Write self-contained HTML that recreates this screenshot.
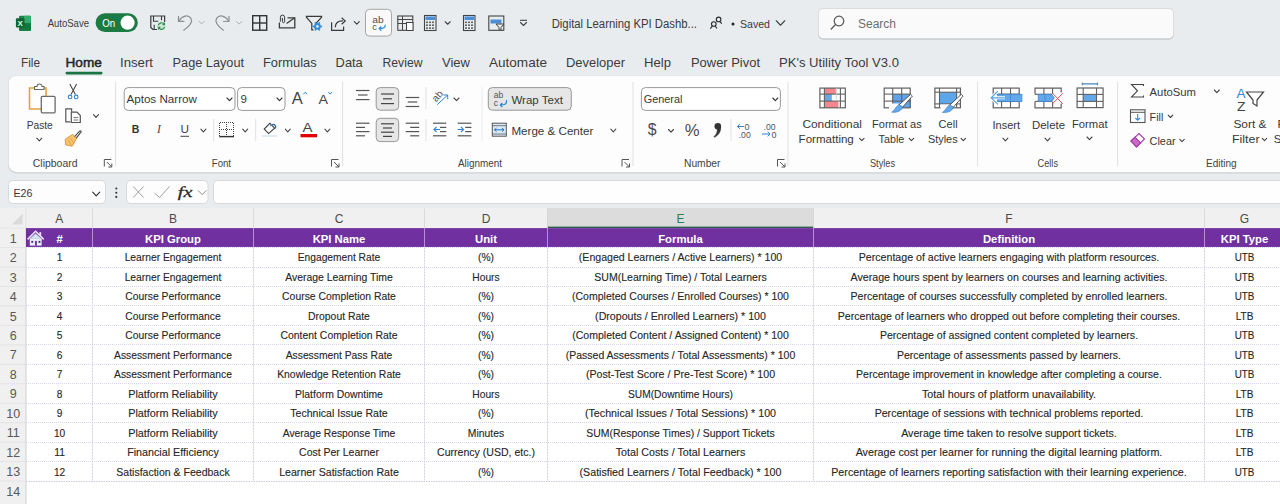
<!DOCTYPE html>
<html><head><meta charset="utf-8"><title>Digital Learning KPI Dashboard - Excel</title>
<style>
html,body{margin:0;padding:0;width:1280px;height:504px;overflow:hidden;background:#e8ecef;}
svg{display:block;font-family:"Liberation Sans",sans-serif;}
</style></head><body>
<svg width="1280" height="504" viewBox="0 0 1280 504">
<rect x="0.00" y="0.00" width="1280.00" height="504.00" fill="#e8ecef"/>
<rect x="19.00" y="15.70" width="12.00" height="15.00" fill="#15854a" rx="1.2"/>
<rect x="24.00" y="15.70" width="7.00" height="7.50" fill="#2fae6c" rx="1"/>
<rect x="19.00" y="23.20" width="12.00" height="7.50" fill="#0f7a40" rx="1"/>
<rect x="15.90" y="18.20" width="8.60" height="9.40" fill="#0b6633" rx="1"/>
<text x="20.20" y="25.60" font-size="8" fill="#e8f5ec" text-anchor="middle" font-weight="bold">X</text>
<text x="47.70" y="27.30" font-size="10.5" fill="#3b3b3b" textLength="41.30" lengthAdjust="spacingAndGlyphs">AutoSave</text>
<rect x="95.60" y="13.30" width="42.20" height="18.70" fill="#1c7b43" rx="9.35"/>
<text x="102.30" y="27.30" font-size="10.5" fill="#fff" textLength="13.00" lengthAdjust="spacingAndGlyphs">On</text>
<circle cx="127.6" cy="22.65" r="7.1" fill="#fff"/>
<path d="M157 29.5 H152.8 L150.8 27.5 V16 H164.6 V22" fill="none" stroke="#3a3a3a" stroke-width="1.2"/>
<path d="M153.5 16 V21.2 H158.3" fill="none" stroke="#3a3a3a" stroke-width="1.1"/>
<path d="M161.5 16 V20.3" fill="none" stroke="#3a3a3a" stroke-width="1.1"/>
<path d="M154.2 24.8 V29.5" fill="none" stroke="#3a3a3a" stroke-width="1.1"/>
<circle cx="161.4" cy="26.1" r="4.6" fill="#c9ecd3"/>
<path d="M158.3 25.4 A3.2 3.2 0 0 1 164.3 24.6 M164.5 26.8 A3.2 3.2 0 0 1 158.5 27.6 M164.4 22.8 V24.8 H162.4 M158.4 29.4 V27.4 H160.4" fill="none" stroke="#2f8a52" stroke-width="1.1"/>
<path d="M178.5 15.9 V21.4 H184.4" fill="none" stroke="#8e8e8e" stroke-width="1.2"/>
<path d="M179 20.9 C182 15.6 188.2 14.2 190.9 18.3 C193.2 22 190.5 25.6 183.4 30.6" fill="none" stroke="#8e8e8e" stroke-width="1.2"/>
<path d="M199.10 21.30 L201.70 23.90 L204.30 21.30" fill="none" stroke="#b0b0b0" stroke-width="1" stroke-linecap="round" stroke-linejoin="round"/>
<path d="M229 15.9 V21.5 H223.1" fill="none" stroke="#8e8e8e" stroke-width="1.2"/>
<path d="M228.5 20.9 C225.5 15.6 219.3 14.2 216.6 18.3 C214.3 22 217 25.6 223.7 30.6" fill="none" stroke="#8e8e8e" stroke-width="1.2"/>
<path d="M236.50 21.50 L239.10 24.10 L241.70 21.50" fill="none" stroke="#b0b0b0" stroke-width="1" stroke-linecap="round" stroke-linejoin="round"/>
<rect x="252.70" y="15.70" width="14.00" height="14.50" fill="none" stroke="#333" stroke-width="1.4"/>
<line x1="259.70" y1="15.70" x2="259.70" y2="30.20" stroke="#333" stroke-width="1.4"/>
<line x1="252.70" y1="23.00" x2="266.70" y2="23.00" stroke="#333" stroke-width="1.4"/>
<path d="M279.4 22.5 V27.9 H294.8 V17.8 H287.5" fill="none" stroke="#3a3a3a" stroke-width="1.3"/>
<path d="M286.6 23.6 L294.4 17.9" fill="none" stroke="#3a3a3a" stroke-width="1.2"/>
<path d="M280.4 21.5 V17.2 A2.1 2.1 0 0 1 284.6 17.2 V21.6 A1.1 1.1 0 0 1 282.4 21.6 V17.9" fill="none" stroke="#3a3a3a" stroke-width="1.0"/>
<path d="M313.5 29.8 H311.8 V23.4 L306.4 17.2 V16.3 H321.6 V17.2 L316.2 23.2" fill="none" stroke="#3a3a3a" stroke-width="1.2"/>
<circle cx="317.4" cy="26.4" r="3.4" fill="#2f8ee0"/><circle cx="317.4" cy="26.4" r="1.3" fill="#e8ecef"/>
<circle cx="321.30" cy="26.40" r="0.9" fill="#2f8ee0"/>
<circle cx="319.35" cy="29.78" r="0.9" fill="#2f8ee0"/>
<circle cx="315.45" cy="29.78" r="0.9" fill="#2f8ee0"/>
<circle cx="313.50" cy="26.40" r="0.9" fill="#2f8ee0"/>
<circle cx="315.45" cy="23.02" r="0.9" fill="#2f8ee0"/>
<circle cx="319.35" cy="23.02" r="0.9" fill="#2f8ee0"/>
<path d="M331.6 22.2 V30.3 H343.6 V26.6" fill="none" stroke="#3a3a3a" stroke-width="1.2"/>
<path d="M335.2 27.2 C335.5 22.5 338.5 20.7 343 20.9 M341.6 17.8 L345.2 20.9 L341.6 24.2" fill="none" stroke="#3a3a3a" stroke-width="1.2"/>
<path d="M354.30 21.55 L356.80 24.05 L359.30 21.55" fill="none" stroke="#3a3a3a" stroke-width="1.1" stroke-linecap="round" stroke-linejoin="round"/>
<rect x="365.50" y="9.30" width="26.00" height="26.80" fill="#f9f9f9" stroke="#9c9c9c" stroke-width="0.9" rx="4"/>
<text x="372.30" y="22.70" font-size="9" fill="#505050" textLength="11.30" lengthAdjust="spacingAndGlyphs">ab</text>
<text x="372.30" y="29.80" font-size="9" fill="#505050" textLength="4.60" lengthAdjust="spacingAndGlyphs">c</text>
<path d="M385.2 24.6 C385.6 27.6 383.4 28.6 379.3 28.6 M381.3 26.5 L379.1 28.6 L381.3 30.7" fill="none" stroke="#2f8ee0" stroke-width="1.2"/>
<rect x="397.80" y="16.00" width="15.00" height="14.30" fill="none" stroke="#444" stroke-width="1.1"/>
<line x1="397.80" y1="19.50" x2="412.80" y2="19.50" stroke="#444" stroke-width="1"/>
<line x1="397.80" y1="23.50" x2="412.80" y2="23.50" stroke="#444" stroke-width="1"/>
<line x1="402.50" y1="16.00" x2="402.50" y2="30.30" stroke="#444" stroke-width="1"/>
<rect x="406.50" y="22.50" width="6.50" height="8.00" fill="#fff" stroke="#444" stroke-width="1"/>
<rect x="424.50" y="15.50" width="11.50" height="15.00" fill="#e8ecef" stroke="#444" stroke-width="1.1"/>
<rect x="425.50" y="16.50" width="9.50" height="3.50" fill="#4a90d9"/>
<rect x="426.20" y="21.50" width="1.60" height="1.60" fill="#444"/>
<rect x="426.20" y="24.40" width="1.60" height="1.60" fill="#444"/>
<rect x="426.20" y="27.30" width="1.60" height="1.60" fill="#444"/>
<rect x="429.20" y="21.50" width="1.60" height="1.60" fill="#444"/>
<rect x="429.20" y="24.40" width="1.60" height="1.60" fill="#444"/>
<rect x="429.20" y="27.30" width="1.60" height="1.60" fill="#444"/>
<rect x="432.20" y="21.50" width="1.60" height="1.60" fill="#444"/>
<rect x="432.20" y="24.40" width="1.60" height="1.60" fill="#444"/>
<rect x="432.20" y="27.30" width="1.60" height="1.60" fill="#444"/>
<rect x="463.50" y="15.50" width="11.50" height="15.00" fill="#e8ecef" stroke="#444" stroke-width="1.1"/>
<rect x="464.50" y="16.50" width="9.50" height="3.50" fill="#4a90d9"/>
<rect x="465.20" y="21.50" width="1.60" height="1.60" fill="#444"/>
<rect x="465.20" y="24.40" width="1.60" height="1.60" fill="#444"/>
<rect x="465.20" y="27.30" width="1.60" height="1.60" fill="#444"/>
<rect x="468.20" y="21.50" width="1.60" height="1.60" fill="#444"/>
<rect x="468.20" y="24.40" width="1.60" height="1.60" fill="#444"/>
<rect x="468.20" y="27.30" width="1.60" height="1.60" fill="#444"/>
<rect x="471.20" y="21.50" width="1.60" height="1.60" fill="#444"/>
<rect x="471.20" y="24.40" width="1.60" height="1.60" fill="#444"/>
<rect x="471.20" y="27.30" width="1.60" height="1.60" fill="#444"/>
<path d="M445.20 21.75 L447.70 24.25 L450.20 21.75" fill="none" stroke="#444" stroke-width="1.1" stroke-linecap="round" stroke-linejoin="round"/>
<rect x="488.80" y="16.00" width="15.00" height="14.30" fill="none" stroke="#444" stroke-width="1.1"/>
<rect x="490.50" y="19.50" width="11.00" height="4.00" fill="#4a90d9"/>
<path d="M496 24 H504 L501 27.5 V30.5 L499 29.5 V27.5 Z" fill="#e8ecef" stroke="#444" stroke-width="1"/>
<line x1="520.00" y1="20.30" x2="527.00" y2="20.30" stroke="#444" stroke-width="1.1"/>
<path d="M520.50 22.50 L523.50 25.50 L526.50 22.50" fill="none" stroke="#444" stroke-width="1.1" stroke-linecap="round" stroke-linejoin="round"/>
<text x="551.70" y="28.00" font-size="12" fill="#3b3b3b" textLength="145.30" lengthAdjust="spacingAndGlyphs">Digital Learning KPI Dashb...</text>
<circle cx="713.8" cy="24.0" r="2.3" fill="none" stroke="#2a2a2a" stroke-width="1.1"/>
<path d="M712.3 26.2 L710.3 28.6 M715.3 26.2 L716.9 28.4" fill="none" stroke="#2a2a2a" stroke-width="1.1"/>
<circle cx="718.6" cy="19.4" r="2.3" fill="none" stroke="#2a2a2a" stroke-width="1.1"/>
<path d="M720.2 21.8 L721.8 23.6" fill="none" stroke="#2a2a2a" stroke-width="1.1"/>
<circle cx="733.0" cy="24.0" r="1.5" fill="#222"/>
<text x="740.00" y="27.80" font-size="11.5" fill="#3b3b3b" textLength="30.00" lengthAdjust="spacingAndGlyphs">Saved</text>
<path d="M776.25 20.75 L780.50 25.25 L784.75 20.75" fill="none" stroke="#444" stroke-width="1.1" stroke-linecap="round" stroke-linejoin="round"/>
<rect x="818.20" y="8.40" width="355.60" height="31.30" fill="#c9ccd0" rx="5"/>
<rect x="818.70" y="8.90" width="354.60" height="29.30" fill="#fafafa" rx="4.5"/>
<circle cx="839" cy="21" r="4.8" fill="none" stroke="#555" stroke-width="1.2"/>
<line x1="835.50" y1="24.50" x2="830.80" y2="29.50" stroke="#555" stroke-width="1.2"/>
<text x="858.00" y="27.50" font-size="12" fill="#6e6e6e" textLength="38.00" lengthAdjust="spacingAndGlyphs">Search</text>
<text x="21.00" y="67.00" font-size="12.7" fill="#3b3b3b" textLength="19.00" lengthAdjust="spacingAndGlyphs">File</text>
<text x="120.00" y="67.00" font-size="12.7" fill="#3b3b3b" textLength="33.00" lengthAdjust="spacingAndGlyphs">Insert</text>
<text x="172.60" y="67.00" font-size="12.7" fill="#3b3b3b" textLength="71.40" lengthAdjust="spacingAndGlyphs">Page Layout</text>
<text x="263.00" y="67.00" font-size="12.7" fill="#3b3b3b" textLength="53.70" lengthAdjust="spacingAndGlyphs">Formulas</text>
<text x="335.60" y="67.00" font-size="12.7" fill="#3b3b3b" textLength="27.20" lengthAdjust="spacingAndGlyphs">Data</text>
<text x="382.50" y="67.00" font-size="12.7" fill="#3b3b3b" textLength="40.00" lengthAdjust="spacingAndGlyphs">Review</text>
<text x="442.00" y="67.00" font-size="12.7" fill="#3b3b3b" textLength="28.00" lengthAdjust="spacingAndGlyphs">View</text>
<text x="489.00" y="67.00" font-size="12.7" fill="#3b3b3b" textLength="58.00" lengthAdjust="spacingAndGlyphs">Automate</text>
<text x="566.00" y="67.00" font-size="12.7" fill="#3b3b3b" textLength="59.00" lengthAdjust="spacingAndGlyphs">Developer</text>
<text x="644.00" y="67.00" font-size="12.7" fill="#3b3b3b" textLength="27.00" lengthAdjust="spacingAndGlyphs">Help</text>
<text x="691.00" y="67.00" font-size="12.7" fill="#3b3b3b" textLength="69.00" lengthAdjust="spacingAndGlyphs">Power Pivot</text>
<text x="779.00" y="67.00" font-size="12.7" fill="#3b3b3b" textLength="120.00" lengthAdjust="spacingAndGlyphs">PK's Utility Tool V3.0</text>
<text x="65.50" y="67.00" font-size="12.7" fill="#242424" textLength="36.30" lengthAdjust="spacingAndGlyphs" stroke="#242424" stroke-width="0.45">Home</text>
<rect x="65.50" y="71.80" width="37.00" height="2.60" fill="#1a7343" rx="1.3"/>
<rect x="8.20" y="75.40" width="1290.00" height="98.10" fill="#cdd0d3" rx="8.5"/>
<rect x="8.70" y="75.70" width="1290.00" height="96.50" fill="#fdfdfd" rx="8"/>
<line x1="115.60" y1="82.00" x2="115.60" y2="166.00" stroke="#e1e1e1" stroke-width="1"/>
<line x1="342.60" y1="82.00" x2="342.60" y2="166.00" stroke="#e1e1e1" stroke-width="1"/>
<line x1="633.00" y1="82.00" x2="633.00" y2="166.00" stroke="#e1e1e1" stroke-width="1"/>
<line x1="788.00" y1="82.00" x2="788.00" y2="166.00" stroke="#e1e1e1" stroke-width="1"/>
<line x1="977.60" y1="82.00" x2="977.60" y2="166.00" stroke="#e1e1e1" stroke-width="1"/>
<line x1="1117.60" y1="82.00" x2="1117.60" y2="166.00" stroke="#e1e1e1" stroke-width="1"/>
<text x="32.80" y="166.50" font-size="10.5" fill="#424242" textLength="44.70" lengthAdjust="spacingAndGlyphs">Clipboard</text>
<text x="211.80" y="166.50" font-size="10.5" fill="#424242" textLength="19.20" lengthAdjust="spacingAndGlyphs">Font</text>
<text x="458.00" y="166.50" font-size="10.5" fill="#424242" textLength="44.00" lengthAdjust="spacingAndGlyphs">Alignment</text>
<text x="684.00" y="166.50" font-size="10.5" fill="#424242" textLength="36.50" lengthAdjust="spacingAndGlyphs">Number</text>
<text x="870.00" y="166.50" font-size="10.5" fill="#424242" textLength="25.00" lengthAdjust="spacingAndGlyphs">Styles</text>
<text x="1037.60" y="166.50" font-size="10.5" fill="#424242" textLength="20.40" lengthAdjust="spacingAndGlyphs">Cells</text>
<text x="1206.00" y="166.50" font-size="10.5" fill="#424242" textLength="30.70" lengthAdjust="spacingAndGlyphs">Editing</text>
<path d="M104.3 166.5 V159.5 H111.3" fill="none" stroke="#555" stroke-width="1"/>
<path d="M106.8 162.0 L111.8 167.0 M111.8 163.5 V167.0 H108.3" fill="none" stroke="#555" stroke-width="1"/>
<path d="M331.5 166.5 V159.5 H338.5" fill="none" stroke="#555" stroke-width="1"/>
<path d="M334.0 162.0 L339.0 167.0 M339.0 163.5 V167.0 H335.5" fill="none" stroke="#555" stroke-width="1"/>
<path d="M622 166.5 V159.5 H629" fill="none" stroke="#555" stroke-width="1"/>
<path d="M624.5 162.0 L629.5 167.0 M629.5 163.5 V167.0 H626" fill="none" stroke="#555" stroke-width="1"/>
<path d="M777.5 166.5 V159.5 H784.5" fill="none" stroke="#555" stroke-width="1"/>
<path d="M780.0 162.0 L785.0 167.0 M785.0 163.5 V167.0 H781.5" fill="none" stroke="#555" stroke-width="1"/>
<path d="M29.5 88 H46 V109 H29.5 Z" fill="#fff" stroke="#e3a43b" stroke-width="1.6"/>
<path d="M34.5 89.5 V86.5 H37 A2.5 2.5 0 0 1 42 86.5 H44 V89.5 Z" fill="#fff" stroke="#6a6a6a" stroke-width="1.1"/>
<rect x="41.30" y="96.30" width="13.80" height="16.50" fill="#fff" stroke="#6a6a6a" stroke-width="1.3" rx="1"/>
<text x="26.70" y="129.00" font-size="11" fill="#3b3b3b" textLength="26.10" lengthAdjust="spacingAndGlyphs">Paste</text>
<path d="M36.80 138.20 L39.30 140.80 L41.80 138.20" fill="none" stroke="#444" stroke-width="1.1" stroke-linecap="round" stroke-linejoin="round"/>
<path d="M69.8 84 L75.4 94.6 M76.6 84 L71 94.6" fill="none" stroke="#4a4a4a" stroke-width="1.1"/>
<circle cx="70.1" cy="96.9" r="1.8" fill="none" stroke="#2f86d6" stroke-width="1.1"/><circle cx="76.2" cy="96.9" r="1.8" fill="none" stroke="#2f86d6" stroke-width="1.1"/>
<path d="M70.2 121.8 H65.8 V108.8 H71.6 V111.8" fill="none" stroke="#555" stroke-width="1.2"/>
<path d="M71.3 112.2 H77 L80.3 115.5 V122.5 H71.3 Z" fill="#fff" stroke="#555" stroke-width="1.2"/>
<line x1="73.50" y1="117.60" x2="78.20" y2="117.60" stroke="#666" stroke-width="0.9"/>
<line x1="73.50" y1="120.00" x2="78.20" y2="120.00" stroke="#666" stroke-width="0.9"/>
<path d="M93.50 114.70 L96.00 117.30 L98.50 114.70" fill="none" stroke="#444" stroke-width="1.1" stroke-linecap="round" stroke-linejoin="round"/>
<path d="M72.6 134.4 L76.6 138.4 L72.2 146.2 L65.6 144.8 L65.2 139.2 Z" fill="#f7c46e" stroke="#dc9235" stroke-width="0.9"/>
<path d="M68 139.5 L71.5 145.5 M70 137.6 L73.8 143.2" fill="none" stroke="#dc9235" stroke-width="0.6"/>
<path d="M74.6 136.6 L79.6 131.1 C80.4 130.3 81.6 131.3 80.9 132.2 L76.3 138.1" fill="none" stroke="#505050" stroke-width="1.2"/>
<rect x="124.20" y="87.60" width="110.80" height="22.80" fill="#fff" stroke="#8d8d8d" stroke-width="0.9" rx="4"/>
<text x="126.40" y="103.20" font-size="11.5" fill="#383838" textLength="70.60" lengthAdjust="spacingAndGlyphs">Aptos Narrow</text>
<path d="M227.00 98.00 L229.50 100.60 L232.00 98.00" fill="none" stroke="#333" stroke-width="1.1" stroke-linecap="round" stroke-linejoin="round"/>
<rect x="237.60" y="87.60" width="47.40" height="22.80" fill="#fff" stroke="#8d8d8d" stroke-width="0.9" rx="4"/>
<text x="240.50" y="103.20" font-size="11.5" fill="#383838">9</text>
<path d="M277.00 98.00 L279.50 100.60 L282.00 98.00" fill="none" stroke="#333" stroke-width="1.1" stroke-linecap="round" stroke-linejoin="round"/>
<text x="291.80" y="103.60" font-size="16" fill="#444" textLength="11.00" lengthAdjust="spacingAndGlyphs">A</text>
<path d="M303.3 94.3 L305.2 92.2 L307.1 94.3" fill="none" stroke="#2f86d6" stroke-width="1.0"/>
<text x="318.60" y="103.60" font-size="13.5" fill="#444" textLength="9.50" lengthAdjust="spacingAndGlyphs">A</text>
<path d="M328.3 92 L330.2 94.1 L332.1 92" fill="none" stroke="#2f86d6" stroke-width="1.0"/>
<text x="131.80" y="133.00" font-size="11.5" fill="#333" font-weight="bold" textLength="7.60" lengthAdjust="spacingAndGlyphs">B</text>
<text x="157.00" y="133.00" font-size="11.5" fill="#444" font-style="italic" font-family="Liberation Serif">I</text>
<text x="180.50" y="133.00" font-size="11.5" fill="#444" textLength="8.50" lengthAdjust="spacingAndGlyphs">U</text>
<line x1="180.50" y1="136.30" x2="189.00" y2="136.30" stroke="#444" stroke-width="1"/>
<path d="M200.90 129.20 L203.40 131.80 L205.90 129.20" fill="none" stroke="#444" stroke-width="1.1" stroke-linecap="round" stroke-linejoin="round"/>
<line x1="213.70" y1="119.00" x2="213.70" y2="141.00" stroke="#e1e1e1" stroke-width="1"/>
<path d="M219.5 136 V122.5 H233.5 V136" fill="none" stroke="#444" stroke-width="1" stroke-dasharray="1 1"/>
<line x1="226.50" y1="122.00" x2="226.50" y2="136.00" stroke="#444" stroke-width="1" stroke-dasharray="1 1"/>
<line x1="219.00" y1="129.50" x2="234.00" y2="129.50" stroke="#444" stroke-width="1" stroke-dasharray="1 1"/>
<line x1="219.30" y1="136.60" x2="234.00" y2="136.60" stroke="#333" stroke-width="1.4"/>
<path d="M242.70 129.20 L245.20 131.80 L247.70 129.20" fill="none" stroke="#444" stroke-width="1.1" stroke-linecap="round" stroke-linejoin="round"/>
<line x1="255.70" y1="119.00" x2="255.70" y2="141.00" stroke="#e1e1e1" stroke-width="1"/>
<path d="M269.6 122.8 L271.2 124.6 M272 125.4 L274.6 128.2 L268.6 133.6 L264.2 129 L269.8 123.4" fill="none" stroke="#3c3c3c" stroke-width="1.1"/>
<path d="M270.5 126 C273 123 276.5 124.5 275.5 128.5" fill="none" stroke="#2e6da4" stroke-width="1.2"/>
<rect x="261.90" y="135.20" width="15.00" height="1.60" fill="#dbe5ee"/>
<path d="M285.30 129.20 L287.80 131.80 L290.30 129.20" fill="none" stroke="#444" stroke-width="1.1" stroke-linecap="round" stroke-linejoin="round"/>
<text x="302.50" y="132.20" font-size="12.5" fill="#444" textLength="10.00" lengthAdjust="spacingAndGlyphs">A</text>
<rect x="300.50" y="134.00" width="16.50" height="3.30" fill="#e00000"/>
<path d="M324.90 129.20 L327.40 131.80 L329.90 129.20" fill="none" stroke="#444" stroke-width="1.1" stroke-linecap="round" stroke-linejoin="round"/>
<line x1="356.00" y1="90.50" x2="369.50" y2="90.50" stroke="#555" stroke-width="1.2"/>
<line x1="358.00" y1="95.00" x2="367.50" y2="95.00" stroke="#555" stroke-width="1.2"/>
<line x1="356.00" y1="99.60" x2="369.50" y2="99.60" stroke="#555" stroke-width="1.2"/>
<rect x="376.20" y="87.60" width="22.50" height="22.60" fill="#e6e6e6" stroke="#8d8d8d" stroke-width="0.9" rx="4"/>
<line x1="381.00" y1="94.00" x2="394.00" y2="94.00" stroke="#444" stroke-width="1.2"/>
<line x1="383.00" y1="98.80" x2="392.00" y2="98.80" stroke="#444" stroke-width="1.2"/>
<line x1="381.00" y1="103.60" x2="394.00" y2="103.60" stroke="#444" stroke-width="1.2"/>
<line x1="405.70" y1="97.50" x2="419.20" y2="97.50" stroke="#555" stroke-width="1.2"/>
<line x1="407.70" y1="102.00" x2="417.20" y2="102.00" stroke="#555" stroke-width="1.2"/>
<line x1="405.70" y1="106.50" x2="419.20" y2="106.50" stroke="#555" stroke-width="1.2"/>
<line x1="426.00" y1="87.00" x2="426.00" y2="109.00" stroke="#e1e1e1" stroke-width="1"/>
<text x="437.20" y="99.60" font-size="10" fill="#505050" text-anchor="middle" transform="rotate(-50 437.2 96)">ab</text>
<path d="M437.2 104.6 L447.6 95.1 M443.4 95.0 H447.7 V99.2" fill="none" stroke="#2f86d6" stroke-width="1.0"/>
<path d="M454.00 98.00 L456.50 100.60 L459.00 98.00" fill="none" stroke="#444" stroke-width="1.1" stroke-linecap="round" stroke-linejoin="round"/>
<line x1="356.00" y1="123.20" x2="369.50" y2="123.20" stroke="#555" stroke-width="1.2"/>
<line x1="356.00" y1="127.40" x2="365.00" y2="127.40" stroke="#555" stroke-width="1.2"/>
<line x1="356.00" y1="131.60" x2="369.50" y2="131.60" stroke="#555" stroke-width="1.2"/>
<line x1="356.00" y1="135.80" x2="365.00" y2="135.80" stroke="#555" stroke-width="1.2"/>
<rect x="376.20" y="118.30" width="22.50" height="23.30" fill="#e6e6e6" stroke="#8d8d8d" stroke-width="0.9" rx="4"/>
<line x1="381.00" y1="123.80" x2="394.00" y2="123.80" stroke="#444" stroke-width="1.2"/>
<line x1="383.00" y1="128.00" x2="392.00" y2="128.00" stroke="#444" stroke-width="1.2"/>
<line x1="381.00" y1="132.20" x2="394.00" y2="132.20" stroke="#444" stroke-width="1.2"/>
<line x1="383.00" y1="136.40" x2="392.00" y2="136.40" stroke="#444" stroke-width="1.2"/>
<line x1="405.70" y1="123.20" x2="419.20" y2="123.20" stroke="#555" stroke-width="1.2"/>
<line x1="410.20" y1="127.40" x2="419.20" y2="127.40" stroke="#555" stroke-width="1.2"/>
<line x1="405.70" y1="131.60" x2="419.20" y2="131.60" stroke="#555" stroke-width="1.2"/>
<line x1="410.20" y1="135.80" x2="419.20" y2="135.80" stroke="#555" stroke-width="1.2"/>
<line x1="426.00" y1="119.00" x2="426.00" y2="141.00" stroke="#e1e1e1" stroke-width="1"/>
<line x1="433.00" y1="123.20" x2="446.30" y2="123.20" stroke="#555" stroke-width="1.2"/>
<line x1="433.00" y1="135.80" x2="446.30" y2="135.80" stroke="#555" stroke-width="1.2"/>
<line x1="440.00" y1="127.40" x2="446.30" y2="127.40" stroke="#555" stroke-width="1.2"/>
<line x1="440.00" y1="131.60" x2="446.30" y2="131.60" stroke="#555" stroke-width="1.2"/>
<path d="M440 129.5 H434 M436.5 127 L434 129.5 L436.5 132" fill="none" stroke="#2f86d6" stroke-width="1.1"/>
<line x1="457.70" y1="123.20" x2="471.40" y2="123.20" stroke="#555" stroke-width="1.2"/>
<line x1="457.70" y1="135.80" x2="471.40" y2="135.80" stroke="#555" stroke-width="1.2"/>
<line x1="465.20" y1="127.40" x2="471.40" y2="127.40" stroke="#555" stroke-width="1.2"/>
<line x1="465.20" y1="131.60" x2="471.40" y2="131.60" stroke="#555" stroke-width="1.2"/>
<path d="M457.7 129.5 H463.5 M461 127 L463.5 129.5 L461 132" fill="none" stroke="#2f86d6" stroke-width="1.1"/>
<line x1="482.00" y1="87.00" x2="482.00" y2="141.00" stroke="#ececec" stroke-width="1"/>
<rect x="488.30" y="87.60" width="83.00" height="22.60" fill="#e6e6e6" stroke="#8d8d8d" stroke-width="0.9" rx="4"/>
<text x="493.80" y="98.30" font-size="8.5" fill="#555" textLength="9.50" lengthAdjust="spacingAndGlyphs">ab</text>
<text x="493.80" y="106.00" font-size="8.5" fill="#555">c</text>
<path d="M506.5 100 C507 104 505 105 500.5 105 M502.3 103 L500.3 105 L502.3 107" fill="none" stroke="#1e88d8" stroke-width="1.1"/>
<text x="511.40" y="103.60" font-size="11.5" fill="#383838" textLength="51.50" lengthAdjust="spacingAndGlyphs">Wrap Text</text>
<rect x="492.30" y="123.20" width="14.00" height="13.00" fill="#dbeaf7" stroke="#555" stroke-width="1"/>
<line x1="492.30" y1="125.70" x2="506.30" y2="125.70" stroke="#555" stroke-width="0.8"/>
<line x1="492.30" y1="134.00" x2="506.30" y2="134.00" stroke="#555" stroke-width="0.8"/>
<path d="M494.5 129.8 H504 M496.5 128 L494.5 129.8 L496.5 131.6 M502 128 L504 129.8 L502 131.6" fill="none" stroke="#1e6fc0" stroke-width="1"/>
<text x="511.40" y="134.70" font-size="11.5" fill="#383838" textLength="82.00" lengthAdjust="spacingAndGlyphs">Merge &amp; Center</text>
<path d="M610.80 129.20 L613.30 131.80 L615.80 129.20" fill="none" stroke="#444" stroke-width="1.1" stroke-linecap="round" stroke-linejoin="round"/>
<rect x="641.40" y="87.60" width="139.00" height="22.80" fill="#fff" stroke="#8d8d8d" stroke-width="0.9" rx="4"/>
<text x="643.70" y="103.20" font-size="11.5" fill="#383838" textLength="38.70" lengthAdjust="spacingAndGlyphs">General</text>
<path d="M772.80 98.00 L775.30 100.60 L777.80 98.00" fill="none" stroke="#333" stroke-width="1.1" stroke-linecap="round" stroke-linejoin="round"/>
<text x="647.80" y="135.20" font-size="17" fill="#4a4a4a" textLength="8.80" lengthAdjust="spacingAndGlyphs">$</text>
<path d="M668.50 129.50 L671.00 132.10 L673.50 129.50" fill="none" stroke="#444" stroke-width="1.1" stroke-linecap="round" stroke-linejoin="round"/>
<text x="684.80" y="135.60" font-size="16.5" fill="#4a4a4a" textLength="14.80" lengthAdjust="spacingAndGlyphs">%</text>
<circle cx="717.8" cy="126.2" r="3.3" fill="#333"/>
<path d="M720.6 127 C721 131 719 135 714.5 137.3 L714 136.5 C716.5 134.5 717.5 132 717.3 129" fill="#333" stroke="#333" stroke-width="0.6"/>
<line x1="731.00" y1="119.00" x2="731.00" y2="141.00" stroke="#e1e1e1" stroke-width="1"/>
<text x="744.50" y="130.00" font-size="9" fill="#555">0</text>
<text x="744.70" y="137.50" font-size="9" fill="#555" text-anchor="middle" textLength="12.00" lengthAdjust="spacingAndGlyphs">.00</text>
<path d="M744 126.5 H737.5 M739.8 124.2 L737.5 126.5 L739.8 128.8" fill="none" stroke="#2f86d6" stroke-width="1"/>
<text x="769.50" y="130.00" font-size="9" fill="#555" text-anchor="middle" textLength="12.00" lengthAdjust="spacingAndGlyphs">.00</text>
<text x="771.50" y="137.50" font-size="9" fill="#555">0</text>
<path d="M762 134 H770 M767.7 131.7 L770 134 L767.7 136.3" fill="none" stroke="#2f86d6" stroke-width="1"/>
<rect x="819.90" y="88.10" width="25.40" height="19.70" fill="#fff"/>
<rect x="824.60" y="88.10" width="11.30" height="6.00" fill="#f4878f"/>
<rect x="824.40" y="94.10" width="7.40" height="7.00" fill="#6aa6e2"/>
<rect x="824.60" y="101.10" width="13.80" height="6.70" fill="#f4878f"/>
<rect x="819.90" y="88.10" width="25.40" height="19.70" fill="none" stroke="#606060" stroke-width="1.2"/>
<line x1="824.40" y1="88.10" x2="824.40" y2="107.80" stroke="#606060" stroke-width="1.1"/>
<line x1="840.40" y1="88.10" x2="840.40" y2="107.80" stroke="#606060" stroke-width="1.1"/>
<line x1="819.90" y1="94.10" x2="845.30" y2="94.10" stroke="#606060" stroke-width="1.1"/>
<line x1="819.90" y1="101.10" x2="845.30" y2="101.10" stroke="#606060" stroke-width="1.1"/>
<line x1="836.30" y1="88.10" x2="836.30" y2="101.10" stroke="#c9c9c9" stroke-width="0.8"/>
<line x1="838.90" y1="101.10" x2="838.90" y2="107.80" stroke="#c9c9c9" stroke-width="0.8"/>
<rect x="884.20" y="88.10" width="26.00" height="19.70" fill="#fff"/>
<rect x="892.70" y="94.10" width="18.00" height="13.70" fill="#5ea6ea"/>
<rect x="884.20" y="88.10" width="26.00" height="19.70" fill="none" stroke="#606060" stroke-width="1.2"/>
<line x1="892.70" y1="88.10" x2="892.70" y2="107.80" stroke="#606060" stroke-width="1.1"/>
<line x1="901.70" y1="88.10" x2="901.70" y2="107.80" stroke="#606060" stroke-width="1.1"/>
<line x1="884.20" y1="94.10" x2="910.20" y2="94.10" stroke="#606060" stroke-width="1.1"/>
<line x1="884.20" y1="101.10" x2="910.20" y2="101.10" stroke="#606060" stroke-width="1.1"/>
<rect x="889" y="103.5" width="10" height="9" fill="#fdfdfd"/>
<path d="M910.60 94.32 L898.80 105.13 L901.80 108.07 L912.40 96.08 Z" fill="#fff" stroke="#444" stroke-width="0.9"/>
<path d="M902.20 106.30 C902.90 110.20 897.80 112.80 891.70 112.20 C894.10 111.20 894.90 107.80 898.70 104.70 Z" fill="#64a8ec" stroke="#3b82c8" stroke-width="0.7"/>
<text x="802.40" y="127.80" font-size="11.5" fill="#383838" textLength="59.60" lengthAdjust="spacingAndGlyphs">Conditional</text>
<text x="798.60" y="143.00" font-size="11.5" fill="#383838" textLength="55.20" lengthAdjust="spacingAndGlyphs">Formatting</text>
<path d="M859.55 138.30 L861.80 140.70 L864.05 138.30" fill="none" stroke="#444" stroke-width="1.1" stroke-linecap="round" stroke-linejoin="round"/>
<text x="872.00" y="127.80" font-size="11.5" fill="#383838" textLength="49.80" lengthAdjust="spacingAndGlyphs">Format as</text>
<text x="878.60" y="143.00" font-size="11.5" fill="#383838" textLength="25.70" lengthAdjust="spacingAndGlyphs">Table</text>
<path d="M909.15 138.30 L911.40 140.70 L913.65 138.30" fill="none" stroke="#444" stroke-width="1.1" stroke-linecap="round" stroke-linejoin="round"/>
<rect x="934.90" y="88.10" width="25.50" height="19.70" fill="#fff"/>
<rect x="939.50" y="92.20" width="17.10" height="11.70" fill="#5ea6ea"/>
<rect x="934.90" y="88.10" width="25.50" height="19.70" fill="none" stroke="#606060" stroke-width="1.2"/>
<line x1="939.50" y1="88.10" x2="939.50" y2="107.80" stroke="#606060" stroke-width="1.1"/>
<line x1="956.60" y1="88.10" x2="956.60" y2="107.80" stroke="#606060" stroke-width="1.1"/>
<line x1="934.90" y1="92.20" x2="960.40" y2="92.20" stroke="#606060" stroke-width="1.1"/>
<line x1="934.90" y1="103.90" x2="960.40" y2="103.90" stroke="#606060" stroke-width="1.1"/>
<rect x="940.5" y="104.6" width="10" height="8" fill="#fdfdfd"/>
<path d="M961.29 94.32 L949.49 105.34 L952.51 108.26 L963.11 96.08 Z" fill="#fff" stroke="#444" stroke-width="0.9"/>
<path d="M952.90 106.50 C953.60 110.40 948.50 113.00 942.40 112.40 C944.80 111.40 945.60 108.00 949.40 104.90 Z" fill="#64a8ec" stroke="#3b82c8" stroke-width="0.7"/>
<text x="938.60" y="127.80" font-size="11.5" fill="#383838" textLength="19.00" lengthAdjust="spacingAndGlyphs">Cell</text>
<text x="928.00" y="143.00" font-size="11.5" fill="#383838" textLength="29.60" lengthAdjust="spacingAndGlyphs">Styles</text>
<path d="M961.05 138.30 L963.30 140.70 L965.55 138.30" fill="none" stroke="#444" stroke-width="1.1" stroke-linecap="round" stroke-linejoin="round"/>
<rect x="993.20" y="88.10" width="26.00" height="19.70" fill="#fff" stroke="#606060" stroke-width="1.2"/>
<line x1="1001.60" y1="88.10" x2="1001.60" y2="107.80" stroke="#606060" stroke-width="1.1"/>
<line x1="1010.50" y1="88.10" x2="1010.50" y2="107.80" stroke="#606060" stroke-width="1.1"/>
<line x1="993.20" y1="94.10" x2="1019.20" y2="94.10" stroke="#606060" stroke-width="1.1"/>
<line x1="993.20" y1="101.50" x2="1019.20" y2="101.50" stroke="#606060" stroke-width="1.1"/>
<rect x="997.70" y="94.30" width="24.20" height="7.10" fill="#64a8ec" stroke="#3f86d0" stroke-width="0.8"/>
<line x1="1010.50" y1="94.30" x2="1010.50" y2="101.40" stroke="#3f86d0" stroke-width="0.8"/>
<path d="M997.8 91.2 L991.2 97.8 L997.8 104.4 M991.6 97.8 H1005" fill="none" stroke="#fff" stroke-width="3.0"/>
<path d="M997.8 91.2 L991.2 97.8 L997.8 104.4 M991.6 97.8 H1005" fill="none" stroke="#5aa2e0" stroke-width="1.2"/>
<text x="992.50" y="129.00" font-size="11.5" fill="#383838" textLength="27.50" lengthAdjust="spacingAndGlyphs">Insert</text>
<path d="M1002.90 138.20 L1005.40 140.80 L1007.90 138.20" fill="none" stroke="#444" stroke-width="1.1" stroke-linecap="round" stroke-linejoin="round"/>
<path d="M1035 94.3 V88.1 H1061.2 V92.5 M1061.2 103.5 V107.8 H1035 V101.4" fill="none" stroke="#606060" stroke-width="1.2"/>
<line x1="1043.90" y1="88.10" x2="1043.90" y2="94.30" stroke="#606060" stroke-width="1.1"/>
<line x1="1052.60" y1="88.10" x2="1052.60" y2="94.30" stroke="#606060" stroke-width="1.1"/>
<line x1="1043.90" y1="101.40" x2="1043.90" y2="107.80" stroke="#606060" stroke-width="1.1"/>
<line x1="1052.60" y1="101.40" x2="1052.60" y2="107.80" stroke="#606060" stroke-width="1.1"/>
<line x1="1035.00" y1="94.30" x2="1052.00" y2="94.30" stroke="#606060" stroke-width="1.1"/>
<line x1="1035.00" y1="101.40" x2="1052.00" y2="101.40" stroke="#606060" stroke-width="1.1"/>
<path d="M1038.3 94.4 H1051.5 L1054.3 97.9 L1051.5 101.4 H1038.3 Z" fill="#64a8ec" stroke="#3f86d0" stroke-width="0.9"/>
<line x1="1045.00" y1="94.40" x2="1045.00" y2="101.40" stroke="#3f86d0" stroke-width="0.8"/>
<path d="M1052.5 93.2 L1062.8 103.8 M1062.8 93.2 L1052.5 103.8" fill="none" stroke="#e0505a" stroke-width="1"/>
<text x="1032.00" y="129.00" font-size="11.5" fill="#383838" textLength="33.00" lengthAdjust="spacingAndGlyphs">Delete</text>
<path d="M1045.00 138.20 L1047.50 140.80 L1050.00 138.20" fill="none" stroke="#444" stroke-width="1.1" stroke-linecap="round" stroke-linejoin="round"/>
<rect x="1077.10" y="88.00" width="26.00" height="19.60" fill="#fff" stroke="#606060" stroke-width="1.2"/>
<rect x="1083.20" y="94.40" width="13.30" height="7.00" fill="#64a8ec"/>
<line x1="1083.20" y1="88.00" x2="1083.20" y2="107.60" stroke="#606060" stroke-width="1.1"/>
<line x1="1096.50" y1="88.00" x2="1096.50" y2="107.60" stroke="#606060" stroke-width="1.1"/>
<line x1="1077.10" y1="94.40" x2="1103.10" y2="94.40" stroke="#606060" stroke-width="1.1"/>
<line x1="1077.10" y1="101.40" x2="1103.10" y2="101.40" stroke="#606060" stroke-width="1.1"/>
<path d="M1082.3 82.6 V85.2 M1082.3 83.9 H1097.5 M1097.5 82.6 V85.2" fill="none" stroke="#4a86b8" stroke-width="1.1"/>
<text x="1072.00" y="127.80" font-size="11.5" fill="#383838" textLength="35.50" lengthAdjust="spacingAndGlyphs">Format</text>
<path d="M1087.00 137.00 L1089.50 139.60 L1092.00 137.00" fill="none" stroke="#444" stroke-width="1.1" stroke-linecap="round" stroke-linejoin="round"/>
<path d="M1143.5 86 V84.5 H1131.5 L1137.5 90.8 L1131.5 97 H1143.5 V95.5" fill="none" stroke="#444" stroke-width="1.1"/>
<text x="1149.60" y="96.00" font-size="11.5" fill="#383838" textLength="46.40" lengthAdjust="spacingAndGlyphs">AutoSum</text>
<path d="M1214.30 90.00 L1216.80 92.60 L1219.30 90.00" fill="none" stroke="#444" stroke-width="1.1" stroke-linecap="round" stroke-linejoin="round"/>
<rect x="1130.50" y="109.80" width="14.50" height="12.70" fill="#fff" stroke="#555" stroke-width="1.1"/>
<line x1="1130.50" y1="112.30" x2="1145.00" y2="112.30" stroke="#555" stroke-width="1"/>
<path d="M1137.7 114 V120 M1135.3 117.8 L1137.7 120.2 L1140.1 117.8" fill="none" stroke="#2f86d6" stroke-width="1.1"/>
<text x="1149.60" y="120.80" font-size="11.5" fill="#383838" textLength="13.70" lengthAdjust="spacingAndGlyphs">Fill</text>
<path d="M1168.25 115.10 L1170.50 117.50 L1172.75 115.10" fill="none" stroke="#444" stroke-width="1.1" stroke-linecap="round" stroke-linejoin="round"/>
<path d="M1131 141 L1139 133.5 L1144.5 139 L1136.5 147 Z" fill="#fff" stroke="#a23ea2" stroke-width="1.1"/>
<path d="M1131 141 L1135 137.2 L1140.5 142.8 L1136.5 147 Z" fill="#c86bc8" stroke="#a23ea2" stroke-width="1.1"/>
<text x="1149.60" y="145.00" font-size="11.5" fill="#383838" textLength="26.00" lengthAdjust="spacingAndGlyphs">Clear</text>
<path d="M1179.75 139.30 L1182.00 141.70 L1184.25 139.30" fill="none" stroke="#444" stroke-width="1.1" stroke-linecap="round" stroke-linejoin="round"/>
<text x="1236.50" y="98.00" font-size="13" fill="#2f86d6" textLength="9.00" lengthAdjust="spacingAndGlyphs">A</text>
<text x="1237.00" y="111.00" font-size="13" fill="#444" textLength="8.50" lengthAdjust="spacingAndGlyphs">Z</text>
<path d="M1246.5 92 H1263.5 L1257 100 V106 L1253 103.5 V100 Z" fill="none" stroke="#444" stroke-width="1.2"/>
<text x="1233.40" y="127.80" font-size="11.5" fill="#383838" textLength="33.20" lengthAdjust="spacingAndGlyphs">Sort &amp;</text>
<text x="1232.00" y="143.00" font-size="11.5" fill="#383838" textLength="27.60" lengthAdjust="spacingAndGlyphs">Filter</text>
<path d="M1262.25 138.30 L1264.50 140.70 L1266.75 138.30" fill="none" stroke="#444" stroke-width="1.1" stroke-linecap="round" stroke-linejoin="round"/>
<text x="1277.60" y="127.80" font-size="11.5" fill="#383838">F</text>
<text x="1273.80" y="143.00" font-size="11.5" fill="#383838">S</text>
<rect x="8.50" y="180.50" width="97.00" height="23.00" fill="#fdfdfd" stroke="#d6d9dc" stroke-width="1" rx="4"/>
<text x="13.50" y="197.30" font-size="11.5" fill="#383838" textLength="19.00" lengthAdjust="spacingAndGlyphs">E26</text>
<path d="M92.70 192.20 L96.20 195.80 L99.70 192.20" fill="none" stroke="#333" stroke-width="1.2" stroke-linecap="round" stroke-linejoin="round"/>
<circle cx="116.3" cy="188.5" r="1.05" fill="#333"/>
<circle cx="116.3" cy="192.7" r="1.05" fill="#333"/>
<circle cx="116.3" cy="196.9" r="1.05" fill="#333"/>
<rect x="126.50" y="180.50" width="81.50" height="23.00" fill="#fdfdfd" stroke="#d6d9dc" stroke-width="1" rx="4"/>
<path d="M133.3 186.5 L143.5 197.5 M143.5 186.5 L133.3 197.5" fill="none" stroke="#a0a0a0" stroke-width="1"/>
<path d="M154.5 193 L159.5 197.5 L169.5 186.5" fill="none" stroke="#a0a0a0" stroke-width="1"/>
<text x="177.80" y="197.40" font-size="15.5" fill="#2a2a2a" textLength="14.60" lengthAdjust="spacingAndGlyphs" font-style="italic" stroke="#2a2a2a" stroke-width="0.3" font-family="Liberation Serif">fx</text>
<path d="M198.20 190.60 L202.20 194.60 L206.20 190.60" fill="none" stroke="#8a8a8a" stroke-width="1" stroke-linecap="round" stroke-linejoin="round"/>
<rect x="213.50" y="180.50" width="1080.00" height="23.00" fill="#fefefe" stroke="#d6d9dc" stroke-width="1" rx="4"/>
<rect x="0.00" y="208.00" width="1280.00" height="20.10" fill="#f0f0f0"/>
<rect x="0.00" y="208.00" width="26.00" height="296.00" fill="#f0f0f0"/>
<rect x="547.50" y="208.00" width="266.00" height="20.10" fill="#dcdcdc"/>
<rect x="547.50" y="226.60" width="266.00" height="1.60" fill="#2f5d50"/>
<rect x="26.00" y="228.10" width="1254.00" height="276.00" fill="#ffffff"/>
<path d="M11.8 224.6 L22.6 213.8 V224.6 Z" fill="#dadada"/>
<line x1="92.50" y1="208.50" x2="92.50" y2="228.00" stroke="#d4d4d4" stroke-width="0.8"/>
<line x1="253.50" y1="208.50" x2="253.50" y2="228.00" stroke="#d4d4d4" stroke-width="0.8"/>
<line x1="424.50" y1="208.50" x2="424.50" y2="228.00" stroke="#d4d4d4" stroke-width="0.8"/>
<line x1="547.50" y1="208.50" x2="547.50" y2="228.00" stroke="#d4d4d4" stroke-width="0.8"/>
<line x1="813.50" y1="208.50" x2="813.50" y2="228.00" stroke="#d4d4d4" stroke-width="0.8"/>
<line x1="1204.50" y1="208.50" x2="1204.50" y2="228.00" stroke="#d4d4d4" stroke-width="0.8"/>
<line x1="26.00" y1="208.00" x2="26.00" y2="228.00" stroke="#e0e0e0" stroke-width="1"/>
<line x1="26.00" y1="228.00" x2="26.00" y2="504.00" stroke="#cfcfcf" stroke-width="1"/>
<text x="59.25" y="223.30" font-size="12" fill="#4a4a4a" text-anchor="middle">A</text>
<text x="173.00" y="223.30" font-size="12" fill="#4a4a4a" text-anchor="middle">B</text>
<text x="339.00" y="223.30" font-size="12" fill="#4a4a4a" text-anchor="middle">C</text>
<text x="486.00" y="223.30" font-size="12" fill="#4a4a4a" text-anchor="middle">D</text>
<text x="680.50" y="223.30" font-size="12" fill="#2e7d4f" text-anchor="middle">E</text>
<text x="1009.00" y="223.30" font-size="12" fill="#4a4a4a" text-anchor="middle">F</text>
<text x="1244.50" y="223.30" font-size="12" fill="#4a4a4a" text-anchor="middle">G</text>
<text x="13.20" y="242.70" font-size="12.5" fill="#585858" text-anchor="middle">1</text>
<line x1="0.00" y1="228.10" x2="26.00" y2="228.10" stroke="#dcdcdc" stroke-width="0.6"/>
<text x="13.20" y="262.16" font-size="12.5" fill="#585858" text-anchor="middle">2</text>
<line x1="0.00" y1="247.56" x2="26.00" y2="247.56" stroke="#dcdcdc" stroke-width="0.6"/>
<text x="13.20" y="281.62" font-size="12.5" fill="#585858" text-anchor="middle">3</text>
<line x1="0.00" y1="267.02" x2="26.00" y2="267.02" stroke="#dcdcdc" stroke-width="0.6"/>
<text x="13.20" y="301.08" font-size="12.5" fill="#585858" text-anchor="middle">4</text>
<line x1="0.00" y1="286.48" x2="26.00" y2="286.48" stroke="#dcdcdc" stroke-width="0.6"/>
<text x="13.20" y="320.54" font-size="12.5" fill="#585858" text-anchor="middle">5</text>
<line x1="0.00" y1="305.94" x2="26.00" y2="305.94" stroke="#dcdcdc" stroke-width="0.6"/>
<text x="13.20" y="340.00" font-size="12.5" fill="#585858" text-anchor="middle">6</text>
<line x1="0.00" y1="325.40" x2="26.00" y2="325.40" stroke="#dcdcdc" stroke-width="0.6"/>
<text x="13.20" y="359.46" font-size="12.5" fill="#585858" text-anchor="middle">7</text>
<line x1="0.00" y1="344.86" x2="26.00" y2="344.86" stroke="#dcdcdc" stroke-width="0.6"/>
<text x="13.20" y="378.92" font-size="12.5" fill="#585858" text-anchor="middle">8</text>
<line x1="0.00" y1="364.32" x2="26.00" y2="364.32" stroke="#dcdcdc" stroke-width="0.6"/>
<text x="13.20" y="398.38" font-size="12.5" fill="#585858" text-anchor="middle">9</text>
<line x1="0.00" y1="383.78" x2="26.00" y2="383.78" stroke="#dcdcdc" stroke-width="0.6"/>
<text x="13.20" y="417.84" font-size="12.5" fill="#585858" text-anchor="middle">10</text>
<line x1="0.00" y1="403.24" x2="26.00" y2="403.24" stroke="#dcdcdc" stroke-width="0.6"/>
<text x="13.20" y="437.30" font-size="12.5" fill="#585858" text-anchor="middle">11</text>
<line x1="0.00" y1="422.70" x2="26.00" y2="422.70" stroke="#dcdcdc" stroke-width="0.6"/>
<text x="13.20" y="456.76" font-size="12.5" fill="#585858" text-anchor="middle">12</text>
<line x1="0.00" y1="442.16" x2="26.00" y2="442.16" stroke="#dcdcdc" stroke-width="0.6"/>
<text x="13.20" y="476.22" font-size="12.5" fill="#585858" text-anchor="middle">13</text>
<line x1="0.00" y1="461.62" x2="26.00" y2="461.62" stroke="#dcdcdc" stroke-width="0.6"/>
<text x="13.20" y="495.68" font-size="12.5" fill="#585858" text-anchor="middle">14</text>
<line x1="0.00" y1="481.08" x2="26.00" y2="481.08" stroke="#dcdcdc" stroke-width="0.6"/>
<rect x="26.00" y="228.10" width="1254.00" height="18.86" fill="#7030a0"/>
<line x1="92.50" y1="228.10" x2="92.50" y2="247.56" stroke="#d8b8f0" stroke-width="0.7"/>
<line x1="253.50" y1="228.10" x2="253.50" y2="247.56" stroke="#d8b8f0" stroke-width="0.7"/>
<line x1="424.50" y1="228.10" x2="424.50" y2="247.56" stroke="#d8b8f0" stroke-width="0.7"/>
<line x1="547.50" y1="228.10" x2="547.50" y2="247.56" stroke="#d8b8f0" stroke-width="0.7"/>
<line x1="813.50" y1="228.10" x2="813.50" y2="247.56" stroke="#d8b8f0" stroke-width="0.7"/>
<line x1="1204.50" y1="228.10" x2="1204.50" y2="247.56" stroke="#d8b8f0" stroke-width="0.7"/>
<text x="59.60" y="242.60" font-size="11.3" fill="#ffffff" text-anchor="middle" font-weight="bold">#</text>
<text x="173.00" y="242.60" font-size="11.3" fill="#ffffff" text-anchor="middle" font-weight="bold">KPI Group</text>
<text x="339.00" y="242.60" font-size="11.3" fill="#ffffff" text-anchor="middle" font-weight="bold">KPI Name</text>
<text x="486.00" y="242.60" font-size="11.3" fill="#ffffff" text-anchor="middle" font-weight="bold">Unit</text>
<text x="680.50" y="242.60" font-size="11.3" fill="#ffffff" text-anchor="middle" font-weight="bold">Formula</text>
<text x="1009.00" y="242.60" font-size="11.3" fill="#ffffff" text-anchor="middle" font-weight="bold">Definition</text>
<text x="1244.50" y="242.60" font-size="11.3" fill="#ffffff" text-anchor="middle" font-weight="bold">KPI Type</text>
<path d="M27.6 239.4 L35.6 231.3 L43.7 239.4" fill="none" stroke="#efe4ff" stroke-width="1.5"/>
<rect x="39.30" y="232.20" width="1.90" height="3.60" fill="#efe4ff"/>
<path d="M30.2 238.6 L35.6 233.4 L41.1 238.6 Z" fill="#d3e4f7"/>
<rect x="29.80" y="238.30" width="11.80" height="7.30" fill="#e9eefc"/>
<rect x="31.30" y="240.90" width="1.90" height="1.90" fill="#4b2670"/>
<rect x="38.50" y="240.90" width="1.90" height="1.90" fill="#4b2670"/>
<rect x="35.00" y="240.90" width="1.90" height="4.70" fill="#6a3a9a"/>
<text x="59.60" y="261.46" font-size="10.9" fill="#262626" text-anchor="middle" textLength="5.66" lengthAdjust="spacingAndGlyphs" stroke="#262626" stroke-width="0.12">1</text>
<text x="173.00" y="261.46" font-size="10.9" fill="#262626" text-anchor="middle" textLength="96.71" lengthAdjust="spacingAndGlyphs" stroke="#262626" stroke-width="0.12">Learner Engagement</text>
<text x="339.00" y="261.46" font-size="10.9" fill="#262626" text-anchor="middle" textLength="82.51" lengthAdjust="spacingAndGlyphs" stroke="#262626" stroke-width="0.12">Engagement Rate</text>
<text x="486.00" y="261.46" font-size="10.9" fill="#262626" text-anchor="middle" textLength="16.03" lengthAdjust="spacingAndGlyphs" stroke="#262626" stroke-width="0.12">(%)</text>
<text x="680.50" y="261.46" font-size="10.9" fill="#262626" text-anchor="middle" textLength="203.36" lengthAdjust="spacingAndGlyphs" stroke="#262626" stroke-width="0.12">(Engaged Learners / Active Learners) * 100</text>
<text x="1009.00" y="261.46" font-size="10.9" fill="#262626" text-anchor="middle" textLength="300.41" lengthAdjust="spacingAndGlyphs" stroke="#262626" stroke-width="0.12">Percentage of active learners engaging with platform resources.</text>
<text x="1244.50" y="261.46" font-size="10.9" fill="#262626" text-anchor="middle" textLength="19.72" lengthAdjust="spacingAndGlyphs" stroke="#262626" stroke-width="0.12">UTB</text>
<text x="59.60" y="280.92" font-size="10.9" fill="#262626" text-anchor="middle" textLength="5.66" lengthAdjust="spacingAndGlyphs" stroke="#262626" stroke-width="0.12">2</text>
<text x="173.00" y="280.92" font-size="10.9" fill="#262626" text-anchor="middle" textLength="96.71" lengthAdjust="spacingAndGlyphs" stroke="#262626" stroke-width="0.12">Learner Engagement</text>
<text x="339.00" y="280.92" font-size="10.9" fill="#262626" text-anchor="middle" textLength="107.52" lengthAdjust="spacingAndGlyphs" stroke="#262626" stroke-width="0.12">Average Learning Time</text>
<text x="486.00" y="280.92" font-size="10.9" fill="#262626" text-anchor="middle" textLength="27.34" lengthAdjust="spacingAndGlyphs" stroke="#262626" stroke-width="0.12">Hours</text>
<text x="680.50" y="280.92" font-size="10.9" fill="#262626" text-anchor="middle" textLength="172.36" lengthAdjust="spacingAndGlyphs" stroke="#262626" stroke-width="0.12">SUM(Learning Time) / Total Learners</text>
<text x="1009.00" y="280.92" font-size="10.9" fill="#262626" text-anchor="middle" textLength="316.88" lengthAdjust="spacingAndGlyphs" stroke="#262626" stroke-width="0.12">Average hours spent by learners on courses and learning activities.</text>
<text x="1244.50" y="280.92" font-size="10.9" fill="#262626" text-anchor="middle" textLength="19.72" lengthAdjust="spacingAndGlyphs" stroke="#262626" stroke-width="0.12">UTB</text>
<text x="59.60" y="300.38" font-size="10.9" fill="#262626" text-anchor="middle" textLength="5.66" lengthAdjust="spacingAndGlyphs" stroke="#262626" stroke-width="0.12">3</text>
<text x="173.00" y="300.38" font-size="10.9" fill="#262626" text-anchor="middle" textLength="95.30" lengthAdjust="spacingAndGlyphs" stroke="#262626" stroke-width="0.12">Course Performance</text>
<text x="339.00" y="300.38" font-size="10.9" fill="#262626" text-anchor="middle" textLength="113.77" lengthAdjust="spacingAndGlyphs" stroke="#262626" stroke-width="0.12">Course Completion Rate</text>
<text x="486.00" y="300.38" font-size="10.9" fill="#262626" text-anchor="middle" textLength="16.03" lengthAdjust="spacingAndGlyphs" stroke="#262626" stroke-width="0.12">(%)</text>
<text x="680.50" y="300.38" font-size="10.9" fill="#262626" text-anchor="middle" textLength="216.94" lengthAdjust="spacingAndGlyphs" stroke="#262626" stroke-width="0.12">(Completed Courses / Enrolled Courses) * 100</text>
<text x="1009.00" y="300.38" font-size="10.9" fill="#262626" text-anchor="middle" textLength="316.90" lengthAdjust="spacingAndGlyphs" stroke="#262626" stroke-width="0.12">Percentage of courses successfully completed by enrolled learners.</text>
<text x="1244.50" y="300.38" font-size="10.9" fill="#262626" text-anchor="middle" textLength="19.72" lengthAdjust="spacingAndGlyphs" stroke="#262626" stroke-width="0.12">UTB</text>
<text x="59.60" y="319.84" font-size="10.9" fill="#262626" text-anchor="middle" textLength="5.66" lengthAdjust="spacingAndGlyphs" stroke="#262626" stroke-width="0.12">4</text>
<text x="173.00" y="319.84" font-size="10.9" fill="#262626" text-anchor="middle" textLength="95.30" lengthAdjust="spacingAndGlyphs" stroke="#262626" stroke-width="0.12">Course Performance</text>
<text x="339.00" y="319.84" font-size="10.9" fill="#262626" text-anchor="middle" textLength="61.85" lengthAdjust="spacingAndGlyphs" stroke="#262626" stroke-width="0.12">Dropout Rate</text>
<text x="486.00" y="319.84" font-size="10.9" fill="#262626" text-anchor="middle" textLength="16.03" lengthAdjust="spacingAndGlyphs" stroke="#262626" stroke-width="0.12">(%)</text>
<text x="680.50" y="319.84" font-size="10.9" fill="#262626" text-anchor="middle" textLength="170.80" lengthAdjust="spacingAndGlyphs" stroke="#262626" stroke-width="0.12">(Dropouts / Enrolled Learners) * 100</text>
<text x="1009.00" y="319.84" font-size="10.9" fill="#262626" text-anchor="middle" textLength="342.42" lengthAdjust="spacingAndGlyphs" stroke="#262626" stroke-width="0.12">Percentage of learners who dropped out before completing their courses.</text>
<text x="1244.50" y="319.84" font-size="10.9" fill="#262626" text-anchor="middle" textLength="17.73" lengthAdjust="spacingAndGlyphs" stroke="#262626" stroke-width="0.12">LTB</text>
<text x="59.60" y="339.30" font-size="10.9" fill="#262626" text-anchor="middle" textLength="5.66" lengthAdjust="spacingAndGlyphs" stroke="#262626" stroke-width="0.12">5</text>
<text x="173.00" y="339.30" font-size="10.9" fill="#262626" text-anchor="middle" textLength="95.30" lengthAdjust="spacingAndGlyphs" stroke="#262626" stroke-width="0.12">Course Performance</text>
<text x="339.00" y="339.30" font-size="10.9" fill="#262626" text-anchor="middle" textLength="117.13" lengthAdjust="spacingAndGlyphs" stroke="#262626" stroke-width="0.12">Content Completion Rate</text>
<text x="486.00" y="339.30" font-size="10.9" fill="#262626" text-anchor="middle" textLength="16.03" lengthAdjust="spacingAndGlyphs" stroke="#262626" stroke-width="0.12">(%)</text>
<text x="680.50" y="339.30" font-size="10.9" fill="#262626" text-anchor="middle" textLength="216.51" lengthAdjust="spacingAndGlyphs" stroke="#262626" stroke-width="0.12">(Completed Content / Assigned Content) * 100</text>
<text x="1009.00" y="339.30" font-size="10.9" fill="#262626" text-anchor="middle" textLength="258.18" lengthAdjust="spacingAndGlyphs" stroke="#262626" stroke-width="0.12">Percentage of assigned content completed by learners.</text>
<text x="1244.50" y="339.30" font-size="10.9" fill="#262626" text-anchor="middle" textLength="19.72" lengthAdjust="spacingAndGlyphs" stroke="#262626" stroke-width="0.12">UTB</text>
<text x="59.60" y="358.76" font-size="10.9" fill="#262626" text-anchor="middle" textLength="5.66" lengthAdjust="spacingAndGlyphs" stroke="#262626" stroke-width="0.12">6</text>
<text x="173.00" y="358.76" font-size="10.9" fill="#262626" text-anchor="middle" textLength="117.91" lengthAdjust="spacingAndGlyphs" stroke="#262626" stroke-width="0.12">Assessment Performance</text>
<text x="339.00" y="358.76" font-size="10.9" fill="#262626" text-anchor="middle" textLength="106.61" lengthAdjust="spacingAndGlyphs" stroke="#262626" stroke-width="0.12">Assessment Pass Rate</text>
<text x="486.00" y="358.76" font-size="10.9" fill="#262626" text-anchor="middle" textLength="16.03" lengthAdjust="spacingAndGlyphs" stroke="#262626" stroke-width="0.12">(%)</text>
<text x="680.50" y="358.76" font-size="10.9" fill="#262626" text-anchor="middle" textLength="229.48" lengthAdjust="spacingAndGlyphs" stroke="#262626" stroke-width="0.12">(Passed Assessments / Total Assessments) * 100</text>
<text x="1009.00" y="358.76" font-size="10.9" fill="#262626" text-anchor="middle" textLength="223.99" lengthAdjust="spacingAndGlyphs" stroke="#262626" stroke-width="0.12">Percentage of assessments passed by learners.</text>
<text x="1244.50" y="358.76" font-size="10.9" fill="#262626" text-anchor="middle" textLength="19.72" lengthAdjust="spacingAndGlyphs" stroke="#262626" stroke-width="0.12">UTB</text>
<text x="59.60" y="378.22" font-size="10.9" fill="#262626" text-anchor="middle" textLength="5.66" lengthAdjust="spacingAndGlyphs" stroke="#262626" stroke-width="0.12">7</text>
<text x="173.00" y="378.22" font-size="10.9" fill="#262626" text-anchor="middle" textLength="117.91" lengthAdjust="spacingAndGlyphs" stroke="#262626" stroke-width="0.12">Assessment Performance</text>
<text x="339.00" y="378.22" font-size="10.9" fill="#262626" text-anchor="middle" textLength="123.72" lengthAdjust="spacingAndGlyphs" stroke="#262626" stroke-width="0.12">Knowledge Retention Rate</text>
<text x="486.00" y="378.22" font-size="10.9" fill="#262626" text-anchor="middle" textLength="16.03" lengthAdjust="spacingAndGlyphs" stroke="#262626" stroke-width="0.12">(%)</text>
<text x="680.50" y="378.22" font-size="10.9" fill="#262626" text-anchor="middle" textLength="189.24" lengthAdjust="spacingAndGlyphs" stroke="#262626" stroke-width="0.12">(Post-Test Score / Pre-Test Score) * 100</text>
<text x="1009.00" y="378.22" font-size="10.9" fill="#262626" text-anchor="middle" textLength="305.82" lengthAdjust="spacingAndGlyphs" stroke="#262626" stroke-width="0.12">Percentage improvement in knowledge after completing a course.</text>
<text x="1244.50" y="378.22" font-size="10.9" fill="#262626" text-anchor="middle" textLength="19.72" lengthAdjust="spacingAndGlyphs" stroke="#262626" stroke-width="0.12">UTB</text>
<text x="59.60" y="397.68" font-size="10.9" fill="#262626" text-anchor="middle" textLength="5.66" lengthAdjust="spacingAndGlyphs" stroke="#262626" stroke-width="0.12">8</text>
<text x="173.00" y="397.68" font-size="10.9" fill="#262626" text-anchor="middle" textLength="89.55" lengthAdjust="spacingAndGlyphs" stroke="#262626" stroke-width="0.12">Platform Reliability</text>
<text x="339.00" y="397.68" font-size="10.9" fill="#262626" text-anchor="middle" textLength="87.80" lengthAdjust="spacingAndGlyphs" stroke="#262626" stroke-width="0.12">Platform Downtime</text>
<text x="486.00" y="397.68" font-size="10.9" fill="#262626" text-anchor="middle" textLength="27.34" lengthAdjust="spacingAndGlyphs" stroke="#262626" stroke-width="0.12">Hours</text>
<text x="680.50" y="397.68" font-size="10.9" fill="#262626" text-anchor="middle" textLength="105.08" lengthAdjust="spacingAndGlyphs" stroke="#262626" stroke-width="0.12">SUM(Downtime Hours)</text>
<text x="1009.00" y="397.68" font-size="10.9" fill="#262626" text-anchor="middle" textLength="174.24" lengthAdjust="spacingAndGlyphs" stroke="#262626" stroke-width="0.12">Total hours of platform unavailability.</text>
<text x="1244.50" y="397.68" font-size="10.9" fill="#262626" text-anchor="middle" textLength="17.73" lengthAdjust="spacingAndGlyphs" stroke="#262626" stroke-width="0.12">LTB</text>
<text x="59.60" y="417.14" font-size="10.9" fill="#262626" text-anchor="middle" textLength="5.66" lengthAdjust="spacingAndGlyphs" stroke="#262626" stroke-width="0.12">9</text>
<text x="173.00" y="417.14" font-size="10.9" fill="#262626" text-anchor="middle" textLength="89.55" lengthAdjust="spacingAndGlyphs" stroke="#262626" stroke-width="0.12">Platform Reliability</text>
<text x="339.00" y="417.14" font-size="10.9" fill="#262626" text-anchor="middle" textLength="97.40" lengthAdjust="spacingAndGlyphs" stroke="#262626" stroke-width="0.12">Technical Issue Rate</text>
<text x="486.00" y="417.14" font-size="10.9" fill="#262626" text-anchor="middle" textLength="16.03" lengthAdjust="spacingAndGlyphs" stroke="#262626" stroke-width="0.12">(%)</text>
<text x="680.50" y="417.14" font-size="10.9" fill="#262626" text-anchor="middle" textLength="191.08" lengthAdjust="spacingAndGlyphs" stroke="#262626" stroke-width="0.12">(Technical Issues / Total Sessions) * 100</text>
<text x="1009.00" y="417.14" font-size="10.9" fill="#262626" text-anchor="middle" textLength="268.66" lengthAdjust="spacingAndGlyphs" stroke="#262626" stroke-width="0.12">Percentage of sessions with technical problems reported.</text>
<text x="1244.50" y="417.14" font-size="10.9" fill="#262626" text-anchor="middle" textLength="17.73" lengthAdjust="spacingAndGlyphs" stroke="#262626" stroke-width="0.12">LTB</text>
<text x="59.60" y="436.60" font-size="10.9" fill="#262626" text-anchor="middle" textLength="11.31" lengthAdjust="spacingAndGlyphs" stroke="#262626" stroke-width="0.12">10</text>
<text x="173.00" y="436.60" font-size="10.9" fill="#262626" text-anchor="middle" textLength="89.55" lengthAdjust="spacingAndGlyphs" stroke="#262626" stroke-width="0.12">Platform Reliability</text>
<text x="339.00" y="436.60" font-size="10.9" fill="#262626" text-anchor="middle" textLength="112.58" lengthAdjust="spacingAndGlyphs" stroke="#262626" stroke-width="0.12">Average Response Time</text>
<text x="486.00" y="436.60" font-size="10.9" fill="#262626" text-anchor="middle" textLength="36.35" lengthAdjust="spacingAndGlyphs" stroke="#262626" stroke-width="0.12">Minutes</text>
<text x="680.50" y="436.60" font-size="10.9" fill="#262626" text-anchor="middle" textLength="188.41" lengthAdjust="spacingAndGlyphs" stroke="#262626" stroke-width="0.12">SUM(Response Times) / Support Tickets</text>
<text x="1009.00" y="436.60" font-size="10.9" fill="#262626" text-anchor="middle" textLength="215.66" lengthAdjust="spacingAndGlyphs" stroke="#262626" stroke-width="0.12">Average time taken to resolve support tickets.</text>
<text x="1244.50" y="436.60" font-size="10.9" fill="#262626" text-anchor="middle" textLength="17.73" lengthAdjust="spacingAndGlyphs" stroke="#262626" stroke-width="0.12">LTB</text>
<text x="59.60" y="456.06" font-size="10.9" fill="#262626" text-anchor="middle" textLength="10.70" lengthAdjust="spacingAndGlyphs" stroke="#262626" stroke-width="0.12">11</text>
<text x="173.00" y="456.06" font-size="10.9" fill="#262626" text-anchor="middle" textLength="91.71" lengthAdjust="spacingAndGlyphs" stroke="#262626" stroke-width="0.12">Financial Efficiency</text>
<text x="339.00" y="456.06" font-size="10.9" fill="#262626" text-anchor="middle" textLength="79.85" lengthAdjust="spacingAndGlyphs" stroke="#262626" stroke-width="0.12">Cost Per Learner</text>
<text x="486.00" y="456.06" font-size="10.9" fill="#262626" text-anchor="middle" textLength="97.83" lengthAdjust="spacingAndGlyphs" stroke="#262626" stroke-width="0.12">Currency (USD, etc.)</text>
<text x="680.50" y="456.06" font-size="10.9" fill="#262626" text-anchor="middle" textLength="129.57" lengthAdjust="spacingAndGlyphs" stroke="#262626" stroke-width="0.12">Total Costs / Total Learners</text>
<text x="1009.00" y="456.06" font-size="10.9" fill="#262626" text-anchor="middle" textLength="306.74" lengthAdjust="spacingAndGlyphs" stroke="#262626" stroke-width="0.12">Average cost per learner for running the digital learning platform.</text>
<text x="1244.50" y="456.06" font-size="10.9" fill="#262626" text-anchor="middle" textLength="17.73" lengthAdjust="spacingAndGlyphs" stroke="#262626" stroke-width="0.12">LTB</text>
<text x="59.60" y="475.52" font-size="10.9" fill="#262626" text-anchor="middle" textLength="11.31" lengthAdjust="spacingAndGlyphs" stroke="#262626" stroke-width="0.12">12</text>
<text x="173.00" y="475.52" font-size="10.9" fill="#262626" text-anchor="middle" textLength="113.44" lengthAdjust="spacingAndGlyphs" stroke="#262626" stroke-width="0.12">Satisfaction &amp; Feedback</text>
<text x="339.00" y="475.52" font-size="10.9" fill="#262626" text-anchor="middle" textLength="119.68" lengthAdjust="spacingAndGlyphs" stroke="#262626" stroke-width="0.12">Learner Satisfaction Rate</text>
<text x="486.00" y="475.52" font-size="10.9" fill="#262626" text-anchor="middle" textLength="16.03" lengthAdjust="spacingAndGlyphs" stroke="#262626" stroke-width="0.12">(%)</text>
<text x="680.50" y="475.52" font-size="10.9" fill="#262626" text-anchor="middle" textLength="201.93" lengthAdjust="spacingAndGlyphs" stroke="#262626" stroke-width="0.12">(Satisfied Learners / Total Feedback) * 100</text>
<text x="1009.00" y="475.52" font-size="10.9" fill="#262626" text-anchor="middle" textLength="355.59" lengthAdjust="spacingAndGlyphs" stroke="#262626" stroke-width="0.12">Percentage of learners reporting satisfaction with their learning experience.</text>
<text x="1244.50" y="475.52" font-size="10.9" fill="#262626" text-anchor="middle" textLength="19.72" lengthAdjust="spacingAndGlyphs" stroke="#262626" stroke-width="0.12">UTB</text>
<line x1="26.00" y1="247.50" x2="1280.00" y2="247.50" stroke="#d9d5ea" stroke-width="1" stroke-dasharray="1 1"/>
<line x1="26.00" y1="267.50" x2="1280.00" y2="267.50" stroke="#d9d5ea" stroke-width="1" stroke-dasharray="1 1"/>
<line x1="26.00" y1="286.50" x2="1280.00" y2="286.50" stroke="#d9d5ea" stroke-width="1" stroke-dasharray="1 1"/>
<line x1="26.00" y1="305.50" x2="1280.00" y2="305.50" stroke="#d9d5ea" stroke-width="1" stroke-dasharray="1 1"/>
<line x1="26.00" y1="325.50" x2="1280.00" y2="325.50" stroke="#d9d5ea" stroke-width="1" stroke-dasharray="1 1"/>
<line x1="26.00" y1="344.50" x2="1280.00" y2="344.50" stroke="#d9d5ea" stroke-width="1" stroke-dasharray="1 1"/>
<line x1="26.00" y1="364.50" x2="1280.00" y2="364.50" stroke="#d9d5ea" stroke-width="1" stroke-dasharray="1 1"/>
<line x1="26.00" y1="383.50" x2="1280.00" y2="383.50" stroke="#d9d5ea" stroke-width="1" stroke-dasharray="1 1"/>
<line x1="26.00" y1="403.50" x2="1280.00" y2="403.50" stroke="#d9d5ea" stroke-width="1" stroke-dasharray="1 1"/>
<line x1="26.00" y1="422.50" x2="1280.00" y2="422.50" stroke="#d9d5ea" stroke-width="1" stroke-dasharray="1 1"/>
<line x1="26.00" y1="442.50" x2="1280.00" y2="442.50" stroke="#d9d5ea" stroke-width="1" stroke-dasharray="1 1"/>
<line x1="26.00" y1="461.50" x2="1280.00" y2="461.50" stroke="#d9d5ea" stroke-width="1" stroke-dasharray="1 1"/>
<line x1="26.00" y1="481.50" x2="1280.00" y2="481.50" stroke="#cfc8e8" stroke-width="1" stroke-dasharray="1.5 1"/>
<line x1="92.50" y1="247.56" x2="92.50" y2="481.08" stroke="#d3cfe6" stroke-width="1" stroke-dasharray="2 1"/>
<line x1="253.50" y1="247.56" x2="253.50" y2="481.08" stroke="#d3cfe6" stroke-width="1" stroke-dasharray="2 1"/>
<line x1="424.50" y1="247.56" x2="424.50" y2="481.08" stroke="#d3cfe6" stroke-width="1" stroke-dasharray="2 1"/>
<line x1="547.50" y1="247.56" x2="547.50" y2="481.08" stroke="#d3cfe6" stroke-width="1" stroke-dasharray="2 1"/>
<line x1="813.50" y1="247.56" x2="813.50" y2="481.08" stroke="#d3cfe6" stroke-width="1" stroke-dasharray="2 1"/>
<line x1="1204.50" y1="247.56" x2="1204.50" y2="481.08" stroke="#d3cfe6" stroke-width="1" stroke-dasharray="2 1"/>
</svg>
</body></html>
